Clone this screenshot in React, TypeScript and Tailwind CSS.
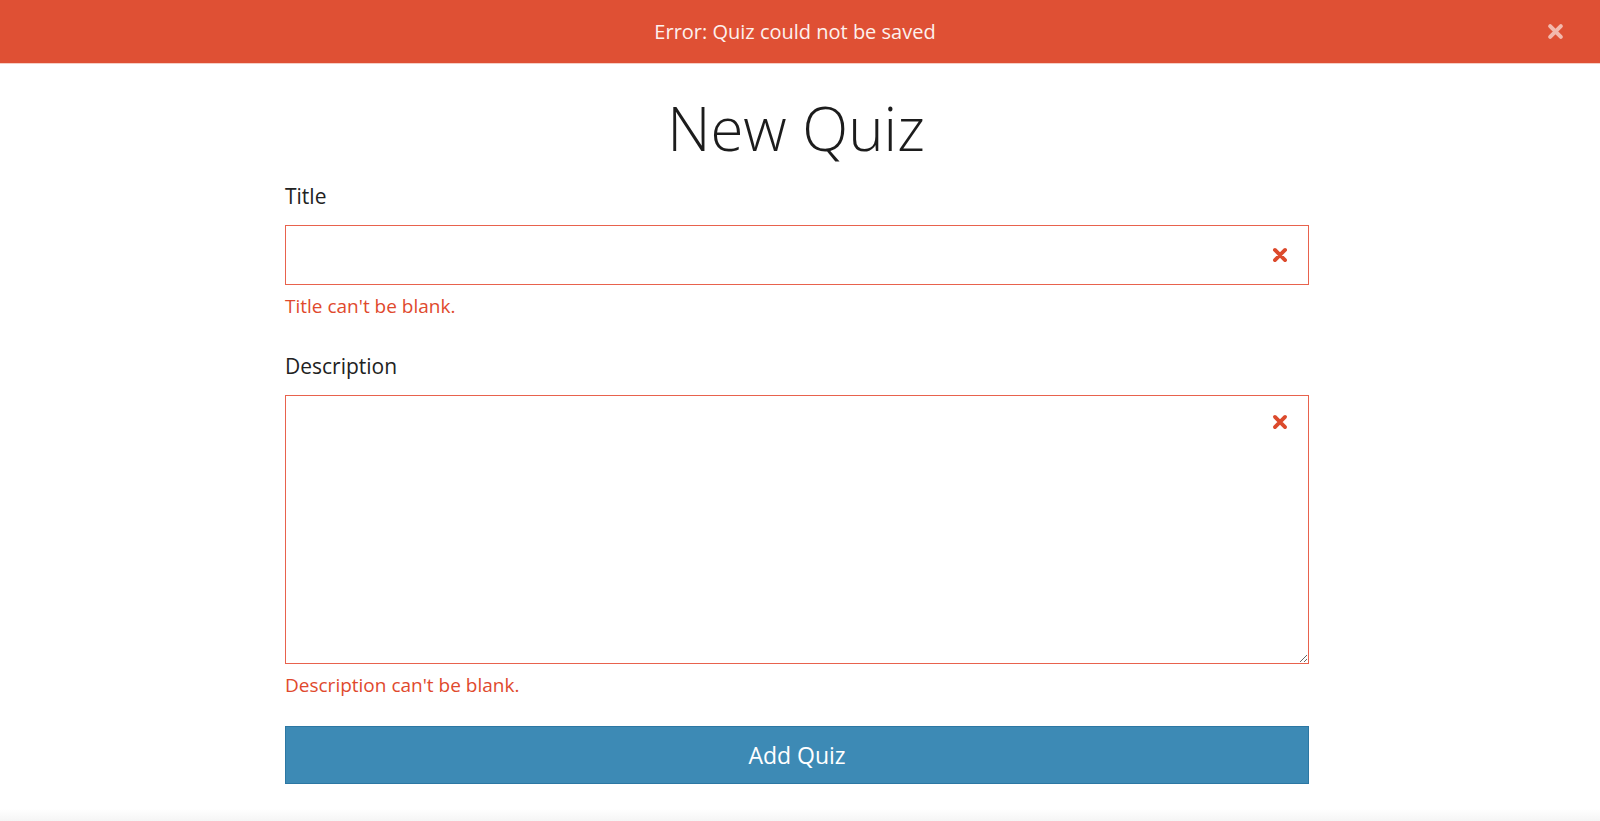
import React from "react";

function TimesIcon({ className }: { className?: string }) {
  return (
    <svg viewBox="0 0 16 16" className={className} fill="none" stroke="currentColor" strokeWidth="3.4" strokeLinecap="round">
      <path d="M3.5 3.5L12.5 12.5M12.5 3.5L3.5 12.5" />
    </svg>
  );
}

function FieldError({ children }: { children: React.ReactNode }) {
  return <p className="text-[19px] leading-[28px] text-[#e0492d]">{children}</p>;
}

export default function App() {
  return (
    <div className="flex min-h-[821px] flex-col bg-white font-['Open_Sans',sans-serif] text-[#222]">
      <div className="flex h-[64px] items-center border-b border-[#f6cfc5] bg-[#df5034] pl-8 pr-[35px]">
        <p className="flex-1 pl-[12px] text-center text-[20px] text-[#fdf1ee]">Error: Quiz could not be saved</p>
        <button className="text-white/60">
          <TimesIcon className="h-[19px] w-[19px]" />
        </button>
      </div>

      <h1 className="mt-[28px] pr-[8px] text-center text-[60px] font-light leading-[72px] text-[#1c1c1c]">New Quiz</h1>

      <form className="ml-[285px] mt-[18px] w-[1024px]">
        <label className="block text-[21px] leading-[28px]">Title</label>
        <div className="relative mt-[15px]">
          <input type="text" className="block h-[60px] w-full border border-[#e8624d] px-4 outline-none" />
          <TimesIcon className="absolute right-[20px] top-[21px] h-[18px] w-[18px] text-[#dc4a2c]" />
        </div>
        <div className="mt-[7px]">
          <FieldError>Title can't be blank.</FieldError>
        </div>

        <label className="mt-[32px] block text-[21px] leading-[28px]">Description</label>
        <div className="relative mt-[15px]">
          <textarea className="block h-[269px] w-full border border-[#e8624d] px-4 py-3 outline-none" />
          <TimesIcon className="absolute right-[20px] top-[18px] h-[18px] w-[18px] text-[#dc4a2c]" />
        </div>
        <div className="mt-[7px]">
          <FieldError>Description can't be blank.</FieldError>
        </div>

        <button
          type="button"
          className="mt-[27px] block h-[58px] w-full border border-[#2c77a3] bg-[#3d8ab5] text-[23px] text-white"
        >
          Add Quiz
        </button>
      </form>

      <div className="flex-1" />
      <div className="h-[12px] bg-gradient-to-b from-white to-[#f5f5f5]" />
    </div>
  );
}
